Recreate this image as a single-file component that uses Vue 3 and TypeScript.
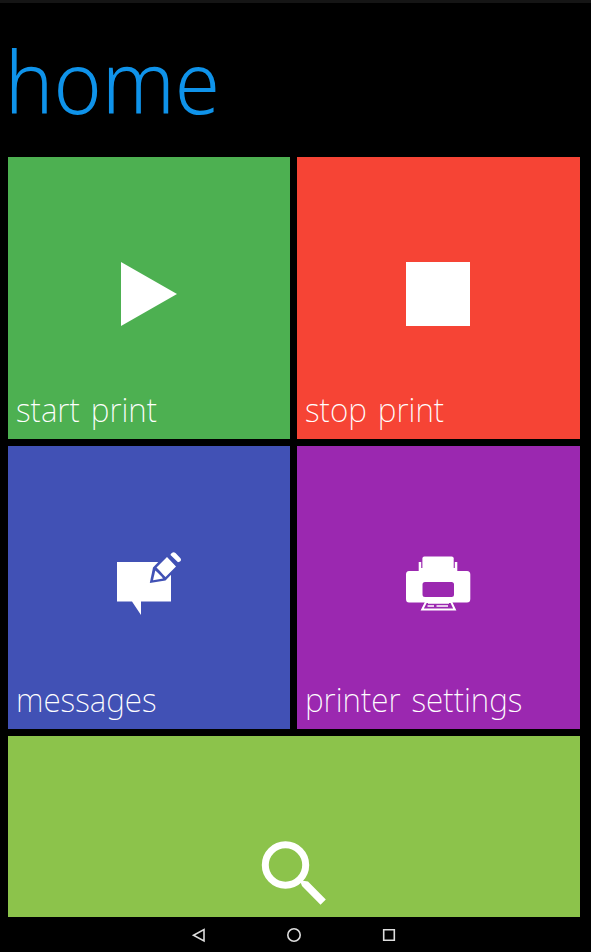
<script setup lang="ts">
interface Tile {
  id: string
  label: string
  kind: 'play' | 'stop' | 'message' | 'printer' | 'search'
}

const tiles: Tile[] = [
  { id: 'start', label: 'start print', kind: 'play' },
  { id: 'stop', label: 'stop print', kind: 'stop' },
  { id: 'messages', label: 'messages', kind: 'message' },
  { id: 'settings', label: 'printer settings', kind: 'printer' },
  { id: 'search', label: '', kind: 'search' },
]
</script>

<template>
  <div class="screen">
    <header class="header">
      <h1 class="title">home</h1>
    </header>
    <main class="tiles">
      <button v-for="tile in tiles" :key="tile.id" class="tile" :class="tile.id">
        <svg class="icon" viewBox="0 0 66 66" fill="#fff">
          <path v-if="tile.kind === 'play'" d="M5 1L61 33L5 65Z" />
          <path v-else-if="tile.kind === 'stop'" d="M1 1H65V65H1Z" />
          <g v-else-if="tile.kind === 'message'">
            <path d="M1 12H55V51.500H25V65L16 51.500H1Z" />
            <path class="cut" d="M33.800 33L37 17.500L49 5L62 17.500L49.500 30.500Z" />
            <path d="M40.500 17.500L51 7L60 16.500L49.500 27L47 24.500L43.500 20.500Z" />
            <path d="M39.300 20.500L41.500 22.500L45.500 26.500L47 28.500L37 30.200Z" />
            <path d="M54.800 4Q57 1 59.500 3L64 7.700Q66 9.700 64 11.500L62 12.300L54.500 5Z" />
          </g>
          <g v-else-if="tile.kind === 'printer'">
            <path d="M19.400 6.500Q17.400 6.500 17.400 8.500V18H48.700V8.500Q48.700 6.500 46.700 6.500Z" />
            <path d="M13.700 12H16.200V18H49.800V12H52.300V23H13.700Z" />
            <path fill-rule="evenodd" d="M4 21H62Q65.300 21 65.300 24.500V49Q65.300 52.500 62 52.500H4Q1 52.500 1 49V24.500Q1 21 4 21ZM20 32Q17.500 32 17.500 34.500V44.500Q17.500 47 20 47H46.500Q49 47 49 44.500V34.500Q49 32 46.500 32Z" />
            <path class="paper" d="M21 52H46.200L49.800 59.500H17.200Z" />
            <path class="lines" d="M23 53.200H44M22.500 56H29M31.500 56H43" />
          </g>
          <g v-else>
            <circle class="lens" cx="24.500" cy="25" r="20.200" />
            <path d="M38.500 39.500L41 46L59.500 64.800L64.800 59.600L47 41.500L42 40.800Z" />
          </g>
        </svg>
        <span v-if="tile.label" class="label">{{ tile.label }}</span>
      </button>
    </main>
    <nav class="navbar">
      <svg viewBox="0 0 16 16"><path d="M13 2.500V14L2.500 8.200Z" /></svg>
      <svg viewBox="0 0 16 16"><circle cx="8" cy="8" r="6.200" /></svg>
      <svg viewBox="0 0 16 16"><path d="M2.700 2.700H13.300V13.300H2.700Z" /></svg>
    </nav>
  </div>
</template>

<style>
body {
  background: #000;
}
</style>

<style scoped>
.screen {
  box-sizing: border-box;
  width: 591px;
  height: 952px;
  overflow: hidden;
  display: flex;
  flex-direction: column;
  background: #000;
  border-top: 3px solid #151515;
  font-family: 'Noto Sans', 'Open Sans', sans-serif;
}
.header {
  flex: 0 0 153.500px;
}
.title {
  margin: 0;
  padding: 17px 0 0 5px;
  color: #0f93ea;
  font-size: 87px;
  line-height: 120px;
  font-weight: 300;
  transform: scaleX(0.94);
  transform-origin: 0 0;
}
.tiles {
  flex: 0 0 760.500px;
  display: grid;
  grid-template-columns: 282.500px 282.500px;
  grid-auto-rows: 282.500px;
  gap: 7px;
  padding-left: 7.500px;
  overflow: hidden;
}
.tile {
  position: relative;
  display: flex;
  align-items: center;
  justify-content: center;
  border: 0;
  padding: 0 0 8px;
  color: #fff;
  font-family: inherit;
}
.start { background: #4db051; }
.stop { background: #f64435; }
.messages { background: #4151b5; }
.settings { background: #9b28b0; }
.search {
  grid-column: span 2;
  background: #8cc34b;
}
.icon {
  width: 66px;
  height: 66px;
}
.cut { fill: #4151b5; }
.paper { fill: #9b28b0; stroke: #fff; stroke-width: 2; }
.lines { stroke: #fff; stroke-width: 1.300; }
.lens { fill: none; stroke: #fff; stroke-width: 7; }
.label {
  position: absolute;
  left: 8px;
  bottom: 7px;
  font-size: 34px;
  line-height: 46px;
  font-weight: 250;
  word-spacing: 3px;
  white-space: nowrap;
  transform: scaleX(0.928);
  transform-origin: 0 0;
}
.navbar {
  flex: 1;
  display: flex;
  justify-content: center;
  align-items: center;
  gap: 79px;
  padding-right: 4px;
}
.navbar svg {
  width: 16px;
  height: 16px;
  fill: none;
  stroke: #ddd;
  stroke-width: 1.600;
}
</style>
